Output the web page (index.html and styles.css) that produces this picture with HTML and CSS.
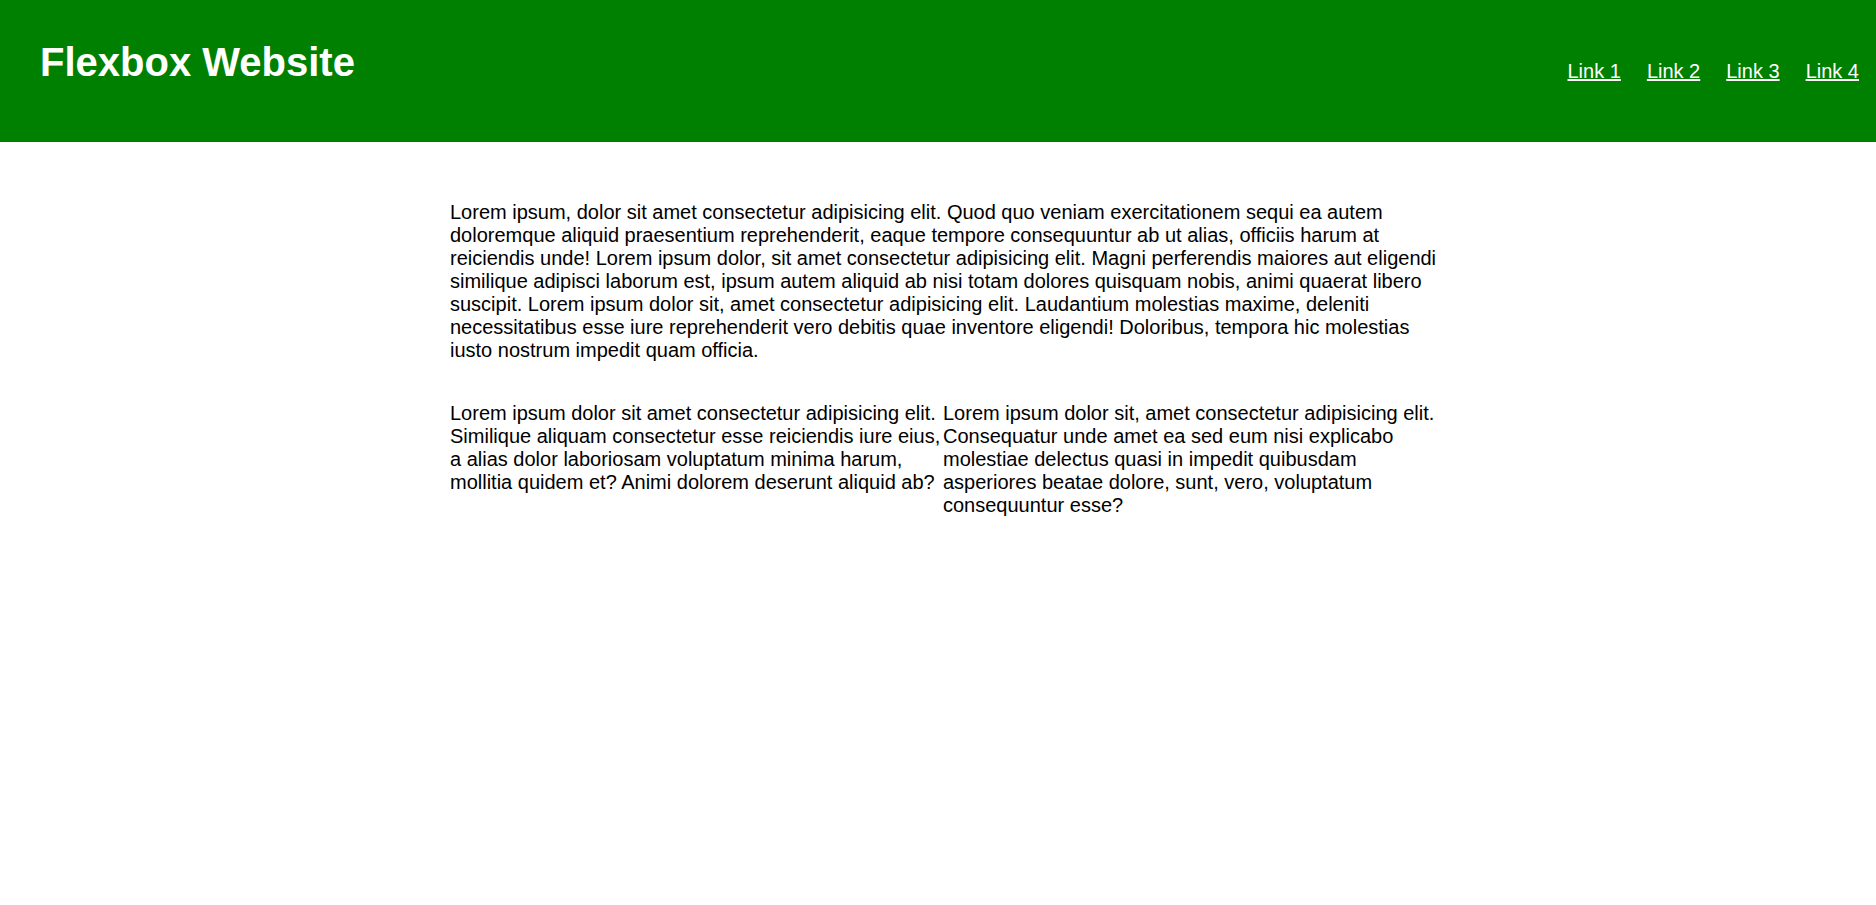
FILE: index.html
```html
<!DOCTYPE html>
<html lang="en">
<head>
<meta charset="UTF-8">
<title>Flexbox Website</title>
<link rel="stylesheet" href="styles.css">
</head>
<body>
<header class="site-header">
  <h1 class="logo">Flexbox Website</h1>
  <nav class="nav">
    <a href="#">Link 1</a>
    <a href="#">Link 2</a>
    <a href="#">Link 3</a>
    <a href="#">Link 4</a>
  </nav>
</header>
<main class="container">
  <p class="para">Lorem ipsum, dolor sit amet consectetur adipisicing elit. Quod quo veniam exercitationem sequi ea autem doloremque aliquid praesentium reprehenderit, eaque tempore consequuntur ab ut alias, officiis harum at reiciendis unde! Lorem ipsum dolor, sit amet consectetur adipisicing elit. Magni perferendis maiores aut eligendi similique adipisci laborum est, ipsum autem aliquid ab nisi totam dolores quisquam nobis, animi quaerat libero suscipit. Lorem ipsum dolor sit, amet consectetur adipisicing elit. Laudantium molestias maxime, deleniti necessitatibus esse iure reprehenderit vero debitis quae inventore eligendi! Doloribus, tempora hic molestias iusto nostrum impedit quam officia.</p>
  <div class="columns">
    <p class="col">Lorem ipsum dolor sit amet consectetur adipisicing elit. Similique aliquam consectetur esse reiciendis iure eius, a alias dolor laboriosam voluptatum minima harum, mollitia quidem et? Animi dolorem deserunt aliquid ab?</p>
    <p class="col">Lorem ipsum dolor sit, amet consectetur adipisicing elit. Consequatur unde amet ea sed eum nisi explicabo molestiae delectus quasi in impedit quibusdam asperiores beatae dolore, sunt, vero, voluptatum consequuntur esse?</p>
  </div>
</main>
</body>
</html>
```

FILE: styles.css
```css
* { box-sizing: border-box; }
body {
  margin: 0;
  font-family: "Liberation Sans", Arial, sans-serif;
  background: #fff;
  color: #000;
}
.site-header {
  display: flex;
  justify-content: space-between;
  align-items: flex-start;
  height: 142px;
  background: #008000;
  padding: 0 17px 0 40px;
}
.logo {
  margin: 39px 0 0;
  font-size: 40px;
  line-height: 46px;
  font-weight: bold;
  color: #fff;
}
.nav {
  display: flex;
  gap: 26px;
  margin-top: 60px;
  font-size: 20px;
  line-height: 23px;
}
.nav a {
  color: #fff;
  text-decoration: underline;
}
.container {
  width: 986px;
  margin: 59px 0 0 calc(50% - 488px);
}
.para {
  margin: 0 -12px 40px 0;
  font-size: 20px;
  line-height: 23px;
}
.columns {
  display: flex;
}
.col {
  flex: 1;
  margin: 0;
  font-size: 20px;
  line-height: 23px;
}
```
